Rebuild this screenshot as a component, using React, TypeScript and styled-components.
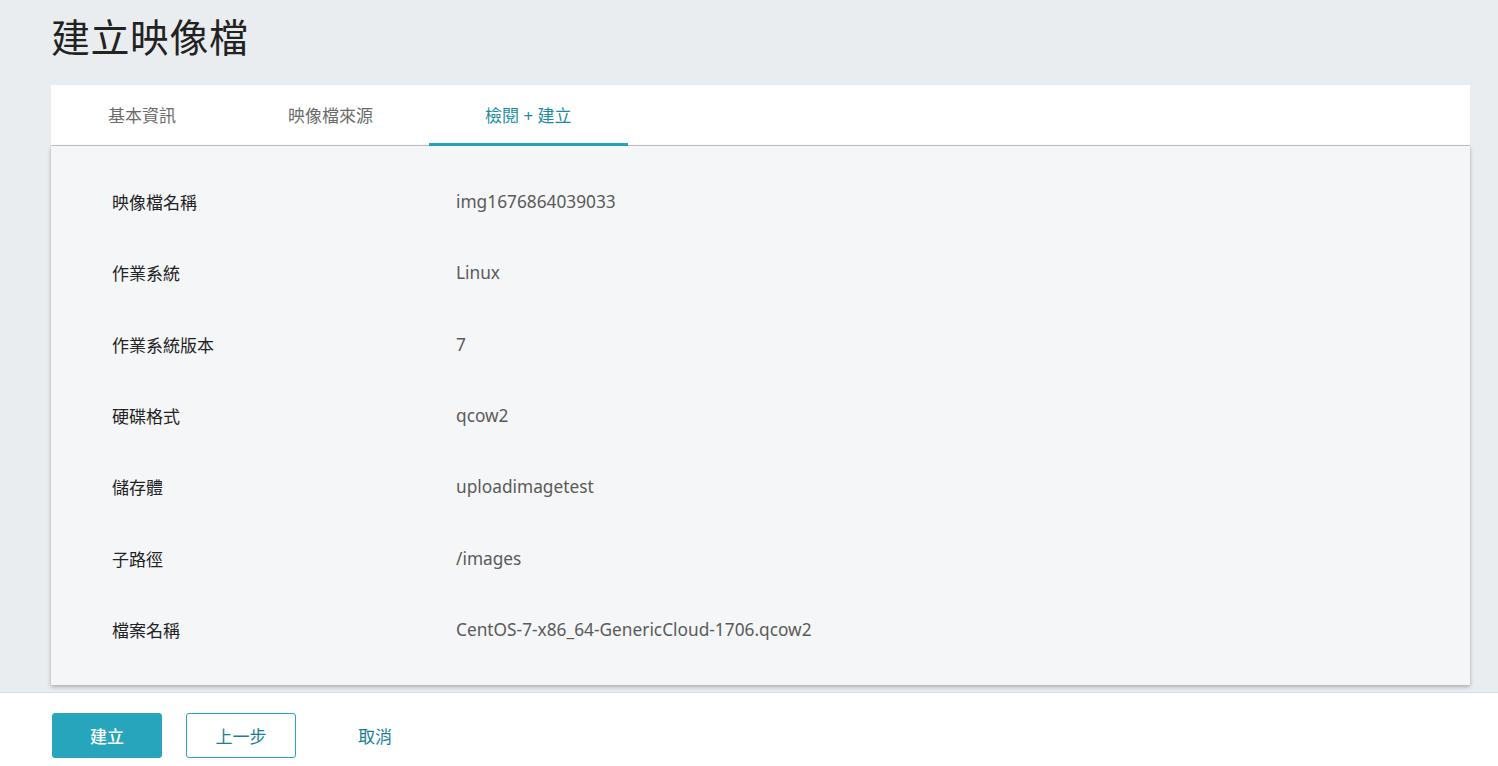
import React from "react";
import styled, { createGlobalStyle } from "styled-components";

const Global = createGlobalStyle`
  html, body { margin: 0; padding: 0; }
  body {
    background: #e9edf0;
    font-family: "Noto Sans", "Noto Sans CJK TC", sans-serif;
    overflow: hidden;
  }
`;

const Page = styled.div`
  width: 1498px;
  height: 766px;
  display: flex;
  flex-direction: column;
`;

const Main = styled.div`
  flex: 1;
  padding: 0 28px 0 51px;
  display: flex;
  flex-direction: column;
`;

const Title = styled.h1`
  margin: 0;
  height: 85px;
  padding-top: 9px;
  box-sizing: border-box;
  font-size: 39px;
  font-weight: 400;
  line-height: 52px;
  color: #222;
  font-family: "Noto Sans CJK TC", sans-serif;
  letter-spacing: 0.5px;
`;

const TabBar = styled.div`
  background: #fff;
  height: 61px;
  display: flex;
  padding-left: 1px;
  border-bottom: 1px solid #c4c7ca;
  box-sizing: border-box;
`;

const Tab = styled.div<{ $active?: boolean }>`
  padding: 0 56px;
  display: flex;
  align-items: center;
  font-size: 17px;
  font-family: "Noto Sans", "Noto Sans CJK TC", sans-serif;
  color: ${(p) => (p.$active ? "#1b8ba3" : "#6b6b6b")};
  border-bottom: 3px solid ${(p) => (p.$active ? "#27a5be" : "transparent")};
  margin-bottom: -1px;
  box-sizing: border-box;
`;

const Panel = styled.div`
  background: #f5f6f8;
  height: 539px;
  box-shadow: 0 2px 4px rgba(0, 0, 0, 0.25), 0 0 2px rgba(0, 0, 0, 0.08);
  padding-top: 20px;
  box-sizing: border-box;
  display: flex;
  flex-direction: column;
`;

const Row = styled.div`
  height: 71.3px;
  display: grid;
  grid-template-columns: 344px 1fr;
  align-items: center;
  padding-left: 61px;
  font-size: 17px;
`;

const Label = styled.div`
  color: #222;
  font-family: "Noto Sans CJK TC", sans-serif;
`;

const Value = styled.div`
  color: #5a5a5a;
  font-size: 17.3px;
  font-family: "Noto Sans", "Noto Sans CJK TC", sans-serif;
`;

const Footer = styled.div`
  height: 74px;
  background: #fff;
  border-top: 1px solid #dcdfe2;
  box-sizing: border-box;
  display: flex;
  align-items: center;
  padding: 0 0 0 52px;
  gap: 24px;
`;

const Button = styled.button<{ $variant: "primary" | "outline" | "text" }>`
  width: 110px;
  height: 45px;
  border-radius: 3px;
  font-size: 17px;
  font-family: "Noto Sans CJK TC", sans-serif;
  cursor: pointer;
  margin-top: 11px;
  background: ${(p) => (p.$variant === "primary" ? "#27a5bd" : "#fff")};
  color: ${(p) => (p.$variant === "primary" ? "#fff" : "#1a7f96")};
  border: 1px solid
    ${(p) => (p.$variant === "text" ? "transparent" : "#27a5bd")};
  font-weight: ${(p) => (p.$variant === "primary" ? 500 : 400)};
`;

const rows: [string, string][] = [
  ["映像檔名稱", "img1676864039033"],
  ["作業系統", "Linux"],
  ["作業系統版本", "7"],
  ["硬碟格式", "qcow2"],
  ["儲存體", "uploadimagetest"],
  ["子路徑", "/images"],
  ["檔案名稱", "CentOS-7-x86_64-GenericCloud-1706.qcow2"],
];

export default function App() {
  return (
    <Page>
      <Global />
      <Main>
        <Title>建立映像檔</Title>
        <TabBar>
          <Tab>基本資訊</Tab>
          <Tab>映像檔來源</Tab>
          <Tab $active>檢閱 + 建立</Tab>
        </TabBar>
        <Panel>
          {rows.map(([l, v]) => (
            <Row key={l}>
              <Label>{l}</Label>
              <Value>{v}</Value>
            </Row>
          ))}
        </Panel>
      </Main>
      <Footer>
        <Button $variant="primary">建立</Button>
        <Button $variant="outline">上一步</Button>
        <Button $variant="text">取消</Button>
      </Footer>
    </Page>
  );
}
